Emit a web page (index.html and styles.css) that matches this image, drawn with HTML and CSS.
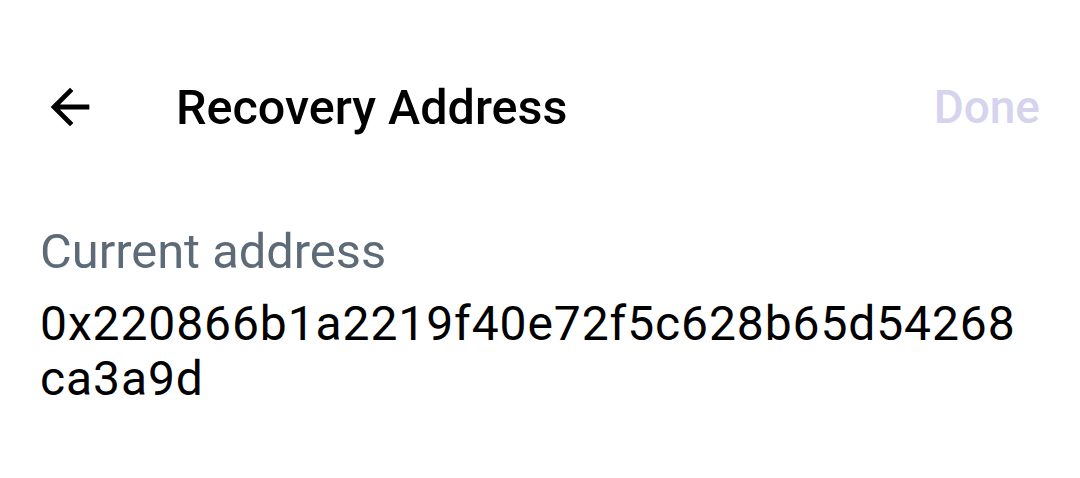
FILE: index.html
```html
<!DOCTYPE html>
<html>
<head>
<meta charset="utf-8">
<link rel="stylesheet" href="styles.css">
</head>
<body>
<div class="screen">
  <header class="topbar">
    <button class="back" aria-label="Back">
      <svg viewBox="0 0 24 24" width="58" height="58"><path d="M20 11H7.83l5.59-5.59L12 4l-8 8 8 8 1.41-1.41L7.83 13H20v-2z" fill="#000"/></svg>
    </button>
    <h1 class="title">Recovery Address</h1>
    <span class="done">Done</span>
  </header>
  <section class="content">
    <div class="label">Current address</div>
    <div class="address">0x220866b1a2219f40e72f5c628b65d54268ca3a9d</div>
  </section>
</div>
</body>
</html>
```
FILE: styles.css
```css
html, body {
  margin: 0;
  padding: 0;
  background: #fff;
}
body {
  font-family: Roboto, "Noto Sans", sans-serif;
  color: #000;
}
.screen {
  width: 1080px;
  height: 478px;
  box-sizing: border-box;
  padding: 78px 40px 0;
  overflow: hidden;
}
.topbar {
  display: flex;
  align-items: center;
  height: 58px;
}
.back {
  border: 0;
  background: none;
  padding: 0;
  width: 58px;
  height: 58px;
  display: flex;
  margin-left: 1px;
}
.title {
  margin: 0 0 0 77px;
  font-size: 48.5px;
  font-weight: 500;
  flex: 1;
}
.done {
  font-size: 46px;
  font-weight: 500;
  color: #d5d3ee;
}
.content {
  margin-top: 88px;
}
.label {
  font-size: 48.8px;
  line-height: 56px;
  color: #5d6a77;
}
.address {
  margin-top: 16px;
  font-size: 48px;
  line-height: 55px;
  word-break: break-all;
  letter-spacing: 0.9px;
  width: 990px;
}
```
